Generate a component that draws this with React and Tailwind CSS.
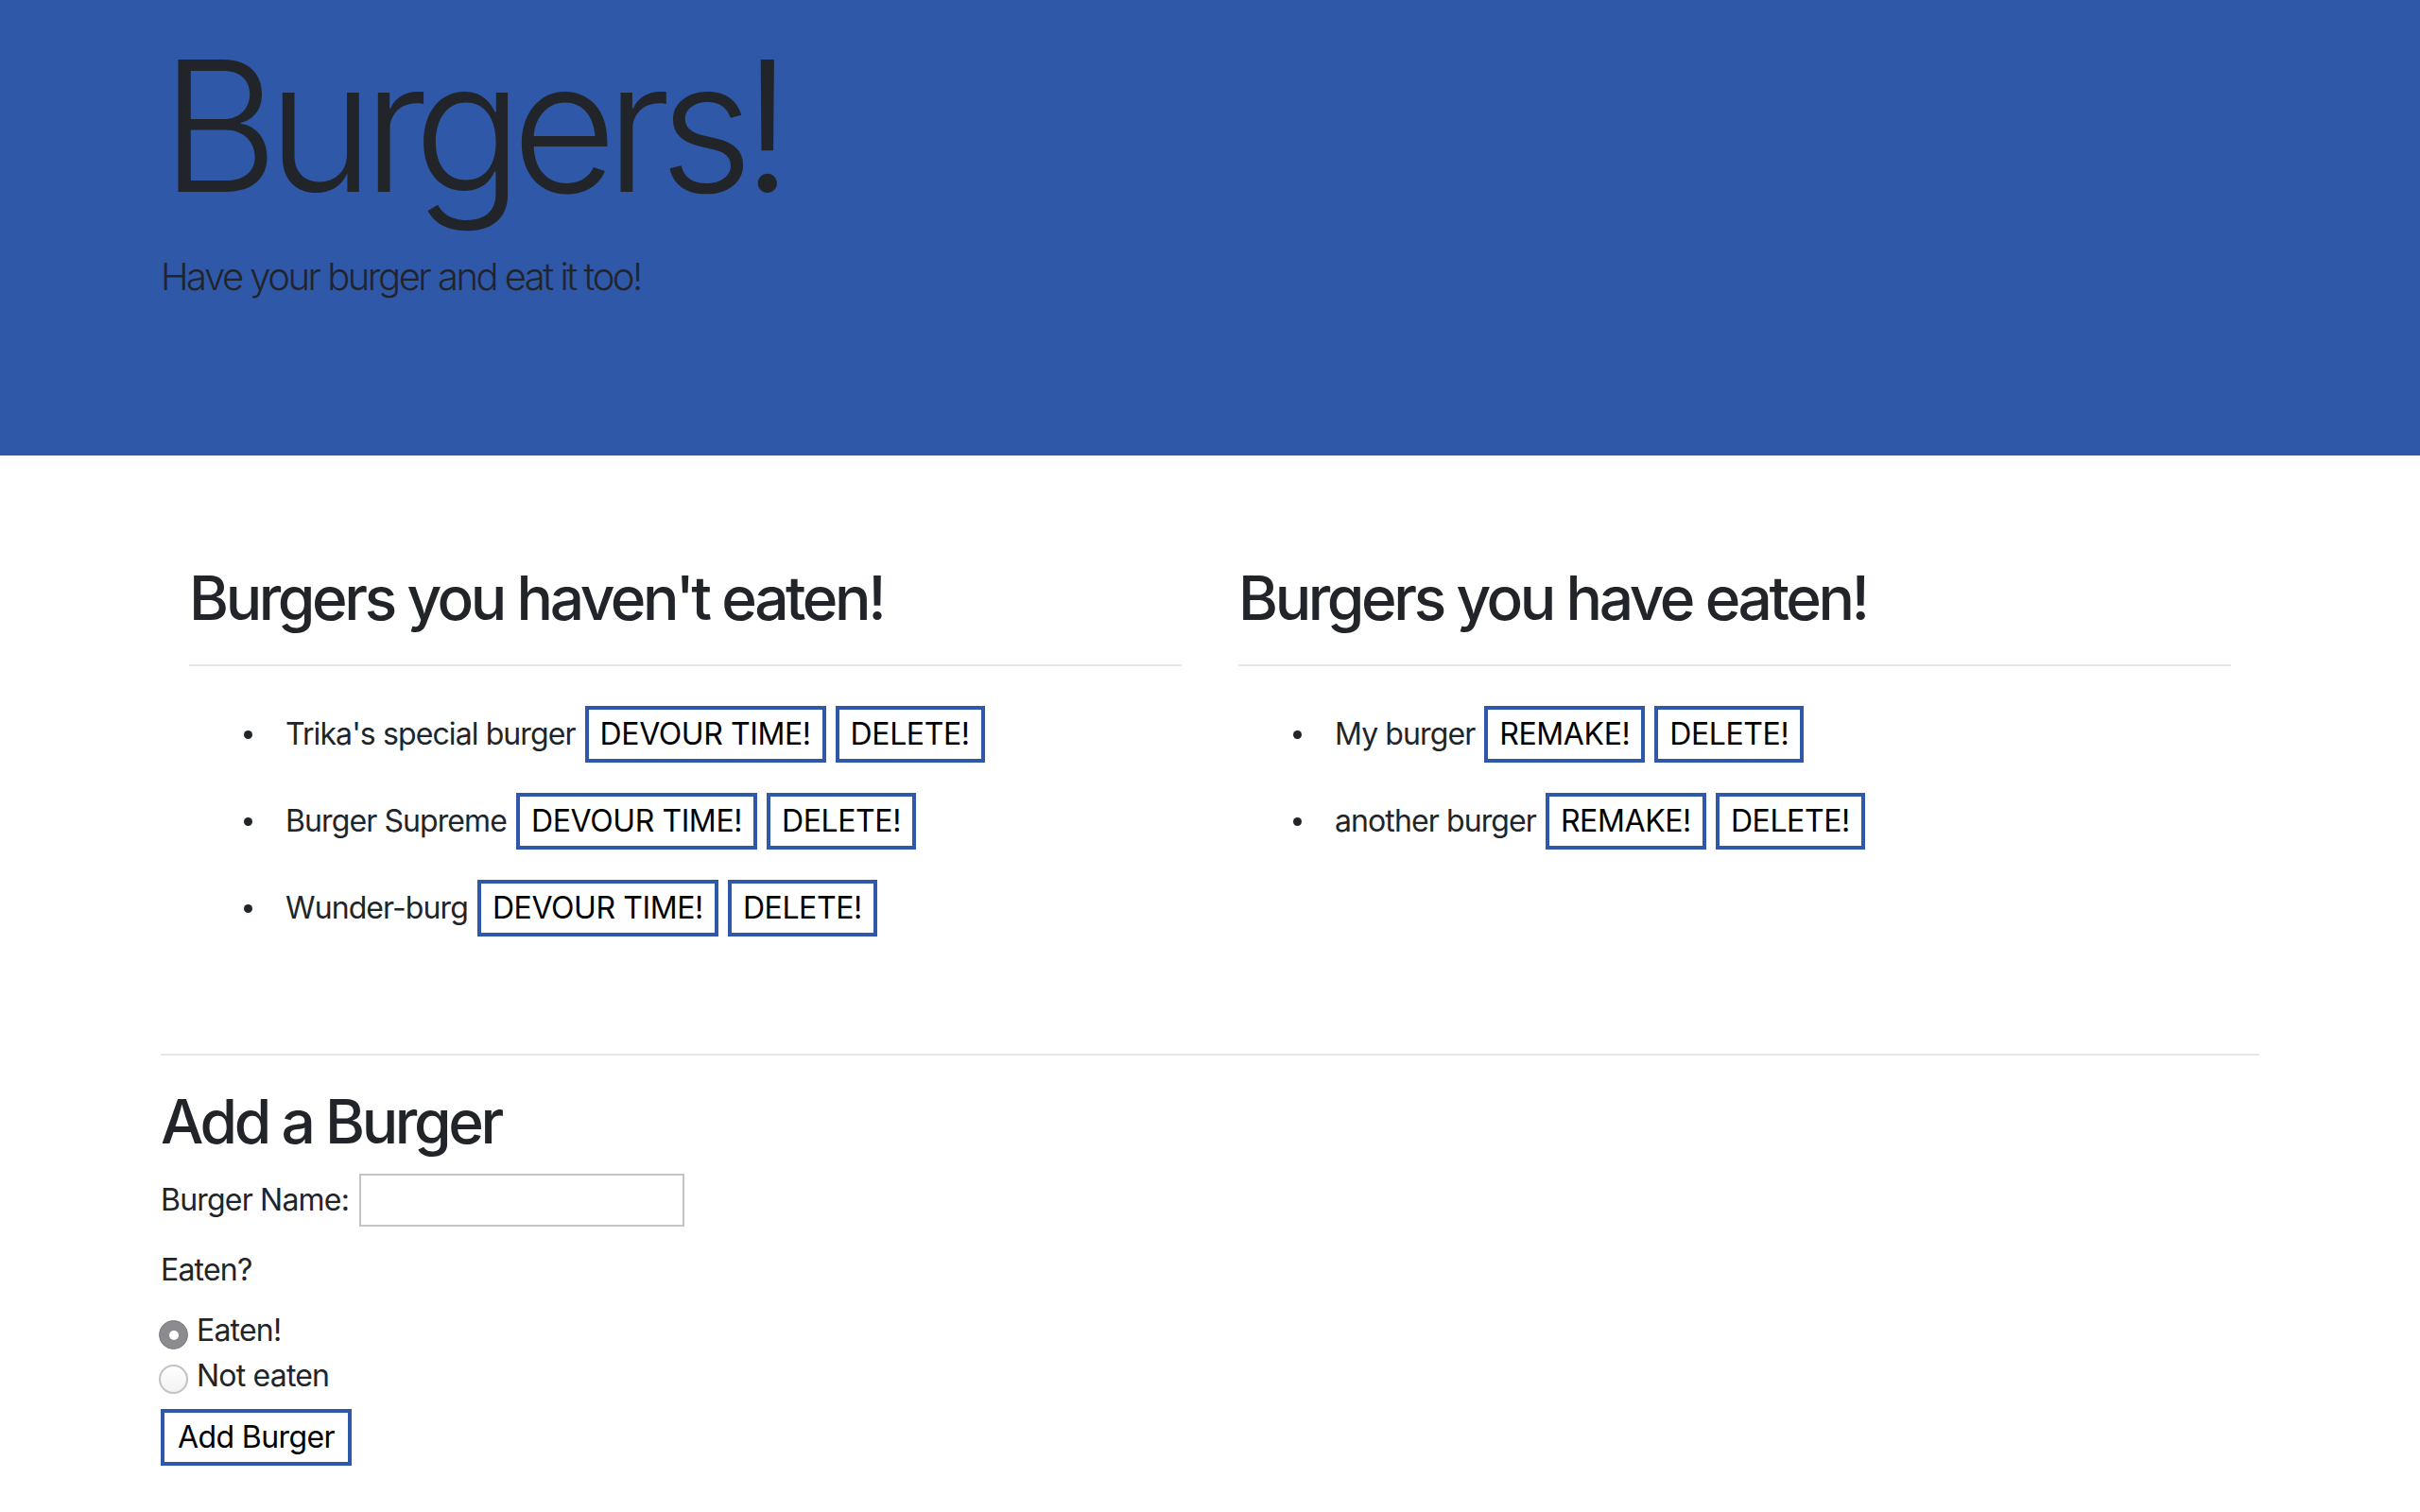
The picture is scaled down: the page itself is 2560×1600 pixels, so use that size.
import React, { useState } from "react";

const uneaten = [
  { id: 1, name: "Trika's special burger" },
  { id: 2, name: "Burger Supreme" },
  { id: 3, name: "Wunder-burg" },
];

const eaten = [
  { id: 4, name: "My burger" },
  { id: 5, name: "another burger" },
];

const OutlineButton = ({ children, onClick }) => (
  <button
    type="button"
    onClick={onClick}
    className="ml-[10px] h-[60px] px-[12px] border-4 border-[#3058a8] bg-white text-black text-[32px] leading-[48px] tracking-[-0.4px] whitespace-nowrap"
  >
    {children}
  </button>
);

const BurgerList = ({ title, items, action }) => (
  <div>
    <h2 className="text-[64px] leading-[77px] font-medium tracking-[-3.4px]">{title}</h2>
    <hr className="mt-[32px] border-0 border-t-2 border-[#e6e6e6]" />
    <ul className="mt-[42px] flex flex-col gap-[32px]">
      {items.map((b) => (
        <li key={b.id} className="flex items-center h-[60px]">
          <span className="ml-[58px] mr-[35px] w-[9px] h-[9px] rounded-full bg-[#212529]" />
          <span className="text-[32px] leading-[48px] tracking-[-0.9px] whitespace-nowrap">{b.name}</span>
          <OutlineButton>{action}</OutlineButton>
          <OutlineButton>DELETE!</OutlineButton>
        </li>
      ))}
    </ul>
  </div>
);

const Radio = ({ checked, label, onClick, top }) => (
  <label className="flex items-start h-[48px] cursor-pointer" onClick={onClick}>
    {checked ? (
      <span className={`-ml-[2px] ${top} w-[31px] h-[31px] rounded-full bg-[#8b8b90] border border-[#7a7a80] flex items-center justify-center`}>
        <span className="w-[10px] h-[10px] rounded-full bg-white" />
      </span>
    ) : (
      <span className={`-ml-[2px] ${top} w-[31px] h-[31px] rounded-full bg-gradient-to-b from-white to-[#f2f2f2] border-2 border-[#c3c3c3]`} />
    )}
    <span className="ml-[9px] text-[32px] leading-[48px] tracking-[-0.8px]">{label}</span>
  </label>
);

export default function App() {
  const [isEaten, setIsEaten] = useState(true);
  const [name, setName] = useState("");

  return (
    <div className="min-h-screen bg-white text-[#212529] font-['Inter','Noto_Sans',sans-serif]">
      <header className="bg-[#3058a8] pt-[18px] pb-[159px]">
        <div className="w-[2280px] mx-auto px-[30px]">
          <h1 className="text-[192px] leading-[230px] font-light tracking-[-12px] mb-[15px]">Burgers!</h1>
          <p className="text-[40px] leading-[60px] font-light tracking-[-2.5px]">Have your burger and eat it too!</p>
        </div>
      </header>

      <main className="w-[2280px] mx-auto px-[30px]">
        <div className="grid grid-cols-2 gap-[60px] px-[30px] pt-[112px] items-start">
          <BurgerList title="Burgers you haven't eaten!" items={uneaten} action="DEVOUR TIME!" />
          <BurgerList title="Burgers you have eaten!" items={eaten} action="REMAKE!" />
        </div>

        <hr className="mt-[124px] border-0 border-t-2 border-[#e6e6e6]" />

        <h2 className="mt-[31px] text-[64px] leading-[77px] font-medium tracking-[-3.4px]">Add a Burger</h2>

        <form onSubmit={(e) => e.preventDefault()}>
          <div className="mt-[17px] flex items-center h-[56px]">
            <label className="text-[32px] leading-[48px] tracking-[-0.8px]">Burger Name:</label>
            <input
              value={name}
              onChange={(e) => setName(e.target.value)}
              className="ml-[11px] w-[344px] h-[56px] border-2 border-[#c4c4c4] bg-white px-[8px] text-[32px] outline-none"
            />
          </div>
          <p className="mt-[22px] text-[32px] leading-[48px] tracking-[-0.8px]">Eaten?</p>
          <div className="mt-[16px]">
            <Radio checked={isEaten} label="Eaten!" top="mt-[13px]" onClick={() => setIsEaten(true)} />
            <Radio checked={!isEaten} label="Not eaten" top="mt-[12px]" onClick={() => setIsEaten(false)} />
          </div>
          <button
            type="submit"
            className="mt-[11px] h-[60px] px-[14px] border-4 border-[#3058a8] bg-white text-black text-[32px] leading-[48px] tracking-[-0.6px]"
          >
            Add Burger
          </button>
        </form>
      </main>
    </div>
  );
}
